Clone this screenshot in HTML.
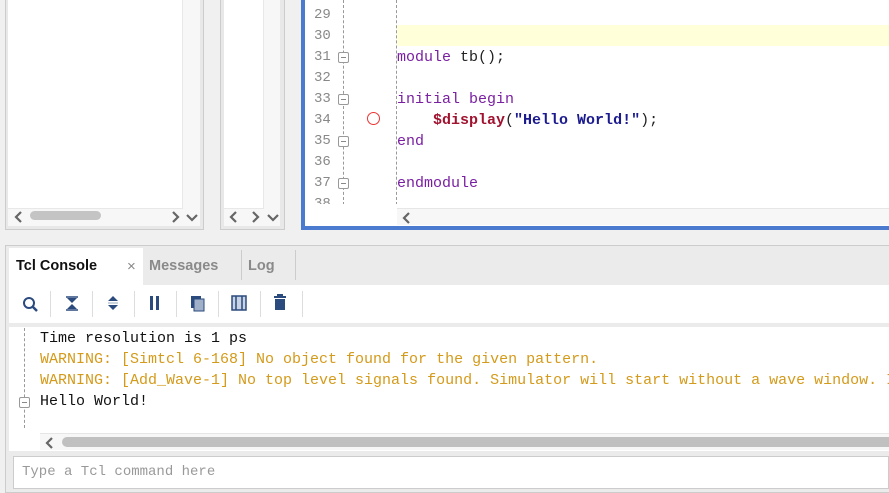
<!DOCTYPE html>
<html><head><style>
*{margin:0;padding:0;box-sizing:border-box}
body{width:889px;height:493px;background:#f0f0f0;position:relative;overflow:hidden;font-family:"Liberation Sans",sans-serif}
.abs{position:absolute}
.mono{font-family:"Liberation Mono",monospace;font-size:15px;white-space:pre;line-height:21px}
.ln{color:#888;font-size:14px}
.kw{color:#7a1fa2}
.sys{color:#a1122f;font-weight:bold}
.str{color:#1b1b8f;font-weight:bold}
.warn{color:#d49a1a}
.sb{background:#f7f7f7}
.fold{width:11px;height:11px;border:1px solid #999;border-radius:2px;background:#fff}
.fold:after{content:"";position:absolute;left:2px;top:4px;width:5px;height:1px;background:#888}
.sep{width:1px;height:26px;background:#ddd;top:291px}
svg.c{position:absolute;width:12px;height:12px;fill:none;stroke:#666;stroke-width:2.2}
</style></head><body>
<!-- panel 1 -->
<div class="abs" style="left:5px;top:-2px;width:199px;height:232px;border:1px solid #ccc;background:#e8e8e8"></div>
<div class="abs" style="left:8px;top:0;width:174px;height:208px;background:#fff"></div>
<div class="abs sb" style="left:183px;top:0;width:17px;height:226px"></div>
<div class="abs sb" style="left:8px;top:209px;width:175px;height:17px"></div>
<div class="abs" style="left:30px;top:211px;width:71px;height:9px;background:#c4c4c4;border-radius:5px"></div>
<svg class="c" style="left:13px;top:211px"><path d="M8 1L3 6l5 5"/></svg>
<svg class="c" style="left:169px;top:211px"><path d="M4 1l5 5-5 5"/></svg>
<svg class="c" style="left:186px;top:211px"><path d="M1 4l5 5 5-5"/></svg>
<!-- panel 2 -->
<div class="abs" style="left:220px;top:-2px;width:65px;height:232px;border:1px solid #ccc;background:#e8e8e8"></div>
<div class="abs" style="left:224px;top:0;width:39px;height:208px;background:#fff"></div>
<div class="abs sb" style="left:264px;top:0;width:16px;height:226px"></div>
<div class="abs sb" style="left:224px;top:209px;width:40px;height:17px"></div>
<svg class="c" style="left:228px;top:211px"><path d="M8 1L3 6l5 5"/></svg>
<svg class="c" style="left:249px;top:211px"><path d="M4 1l5 5-5 5"/></svg>
<svg class="c" style="left:267px;top:211px"><path d="M1 4l5 5 5-5"/></svg>
<!-- editor -->
<div class="abs" style="left:301px;top:-4px;width:592px;height:234px;border:4px solid #4a7bcf;background:#fff"></div>
<div class="abs" style="left:397px;top:25px;width:492px;height:21px;background:#ffffd9"></div>
<div class="abs" style="left:343px;top:0;height:205px;border-left:1px dashed #999"></div>
<div class="abs" style="left:396px;top:0;height:205px;border-left:1px dashed #999"></div>
<div class="abs mono ln" style="left:314px;top:5px">29
30
31
32
33
34
35
36
37
38</div>
<div class="abs fold" style="left:338px;top:52px"></div>
<div class="abs fold" style="left:338px;top:94px"></div>
<div class="abs fold" style="left:338px;top:136px"></div>
<div class="abs fold" style="left:338px;top:178px"></div>
<div class="abs" style="left:367px;top:112px;width:13px;height:13px;border:1.5px solid #e33;border-radius:50%"></div>
<div class="abs mono" style="left:397px;top:47px;color:#222"><span class="kw">module</span> tb();

<span class="kw">initial begin</span>
    <span class="sys">$display</span>(<span class="str">"Hello World!"</span>);
<span class="kw">end</span>

<span class="kw">endmodule</span></div>
<div class="abs" style="left:305px;top:204px;width:92px;height:21px;background:#fff"></div>
<div class="abs sb" style="left:397px;top:208px;width:492px;height:17px;border-top:1px solid #e6e6e6"></div>
<svg class="c" style="left:401px;top:212px"><path d="M8 1L3 6l5 5"/></svg>
<!-- bottom panel -->
<div class="abs" style="left:5px;top:245px;width:890px;height:248px;border:1px solid #ccc;background:#ebebeb"></div>
<div class="abs" style="left:9px;top:248px;width:134px;height:38px;background:#fff"></div>
<div class="abs" style="left:16px;top:258px;font-size:14.5px;font-weight:bold;color:#111">Tcl Console</div>
<div class="abs" style="left:127px;top:258px;font-size:15px;color:#888">×</div>
<div class="abs" style="left:149px;top:258px;font-size:14.5px;font-weight:bold;color:#8a8a8a">Messages</div>
<div class="abs" style="left:241px;top:250px;width:1px;height:30px;background:#ccc"></div>
<div class="abs" style="left:248px;top:258px;font-size:14.5px;font-weight:bold;color:#8a8a8a">Log</div>
<div class="abs" style="left:295px;top:250px;width:1px;height:30px;background:#ccc"></div>
<div class="abs" style="left:9px;top:285px;width:880px;height:38px;background:#fff"></div>
<svg class="abs" style="left:9px;top:285px" width="300" height="38" fill="#2b4a7e" stroke="#2b4a7e">
<circle cx="20" cy="18" r="5" fill="none" stroke-width="2"/><line x1="24" y1="22" x2="28" y2="26" stroke-width="2.5"/>
<path d="M57 12h12M57 25h12" stroke-width="1.5"/><path d="M58 13l5 5 5-5zM58 24l5-5 5 5z" stroke="none"/>
<path d="M99 16l5-5 5 5zM99 20l5 5 5-5z" stroke="none"/><line x1="99" y1="18" x2="109" y2="18" stroke="#9ab" stroke-width="1"/>
<rect x="141" y="11" width="3" height="14" stroke="none"/><rect x="147" y="11" width="3" height="14" stroke="none"/>
<rect x="182" y="11" width="10" height="12" stroke="none"/><rect x="185" y="14" width="10" height="12" fill="#9fb0c8" stroke="#2b4a7e" stroke-width="1"/>
<rect x="223" y="11" width="14" height="14" fill="#c8d4e6" stroke-width="1.5"/><line x1="227" y1="11" x2="227" y2="25" stroke-width="1.5"/><line x1="233" y1="11" x2="233" y2="25" stroke-width="1.5"/>
<rect x="265" y="11" width="12" height="2" stroke="none"/><rect x="268" y="9" width="6" height="2" stroke="none"/><rect x="266" y="14" width="10" height="11" stroke="none"/>
</svg>
<div class="abs sep" style="left:50px"></div><div class="abs sep" style="left:92px"></div><div class="abs sep" style="left:134px"></div><div class="abs sep" style="left:176px"></div><div class="abs sep" style="left:218px"></div><div class="abs sep" style="left:260px"></div><div class="abs sep" style="left:302px"></div>
<div class="abs" style="left:9px;top:327px;width:880px;height:106px;background:#fff"></div>
<div class="abs" style="left:24px;top:328px;height:100px;border-left:1px dashed #999"></div>
<div class="abs fold" style="left:19px;top:397px"></div>
<div class="abs mono" style="left:40px;top:328px;color:#111">Time resolution is 1 ps
<span class="warn">WARNING: [Simtcl 6-168] No object found for the given pattern.</span>
<span class="warn">WARNING: [Add_Wave-1] No top level signals found. Simulator will start without a wave window. I</span>
Hello World!</div>
<div class="abs" style="left:9px;top:433px;width:880px;height:18px;background:#fff"></div>
<div class="abs sb" style="left:40px;top:433px;width:849px;height:17px;border-top:1px solid #e6e6e6"></div>
<div class="abs" style="left:62px;top:437px;width:827px;height:10px;background:#c0c0c0;border-radius:5px 0 0 5px"></div>
<svg class="c" style="left:44px;top:437px"><path d="M8 1L3 6l5 5"/></svg>
<div class="abs" style="left:13px;top:456px;width:876px;height:33px;background:#fff;border:1px solid #ccc"></div>
<div class="abs mono" style="left:22px;top:462px;color:#999;font-size:14px">Type a Tcl command here</div>
</body></html>
